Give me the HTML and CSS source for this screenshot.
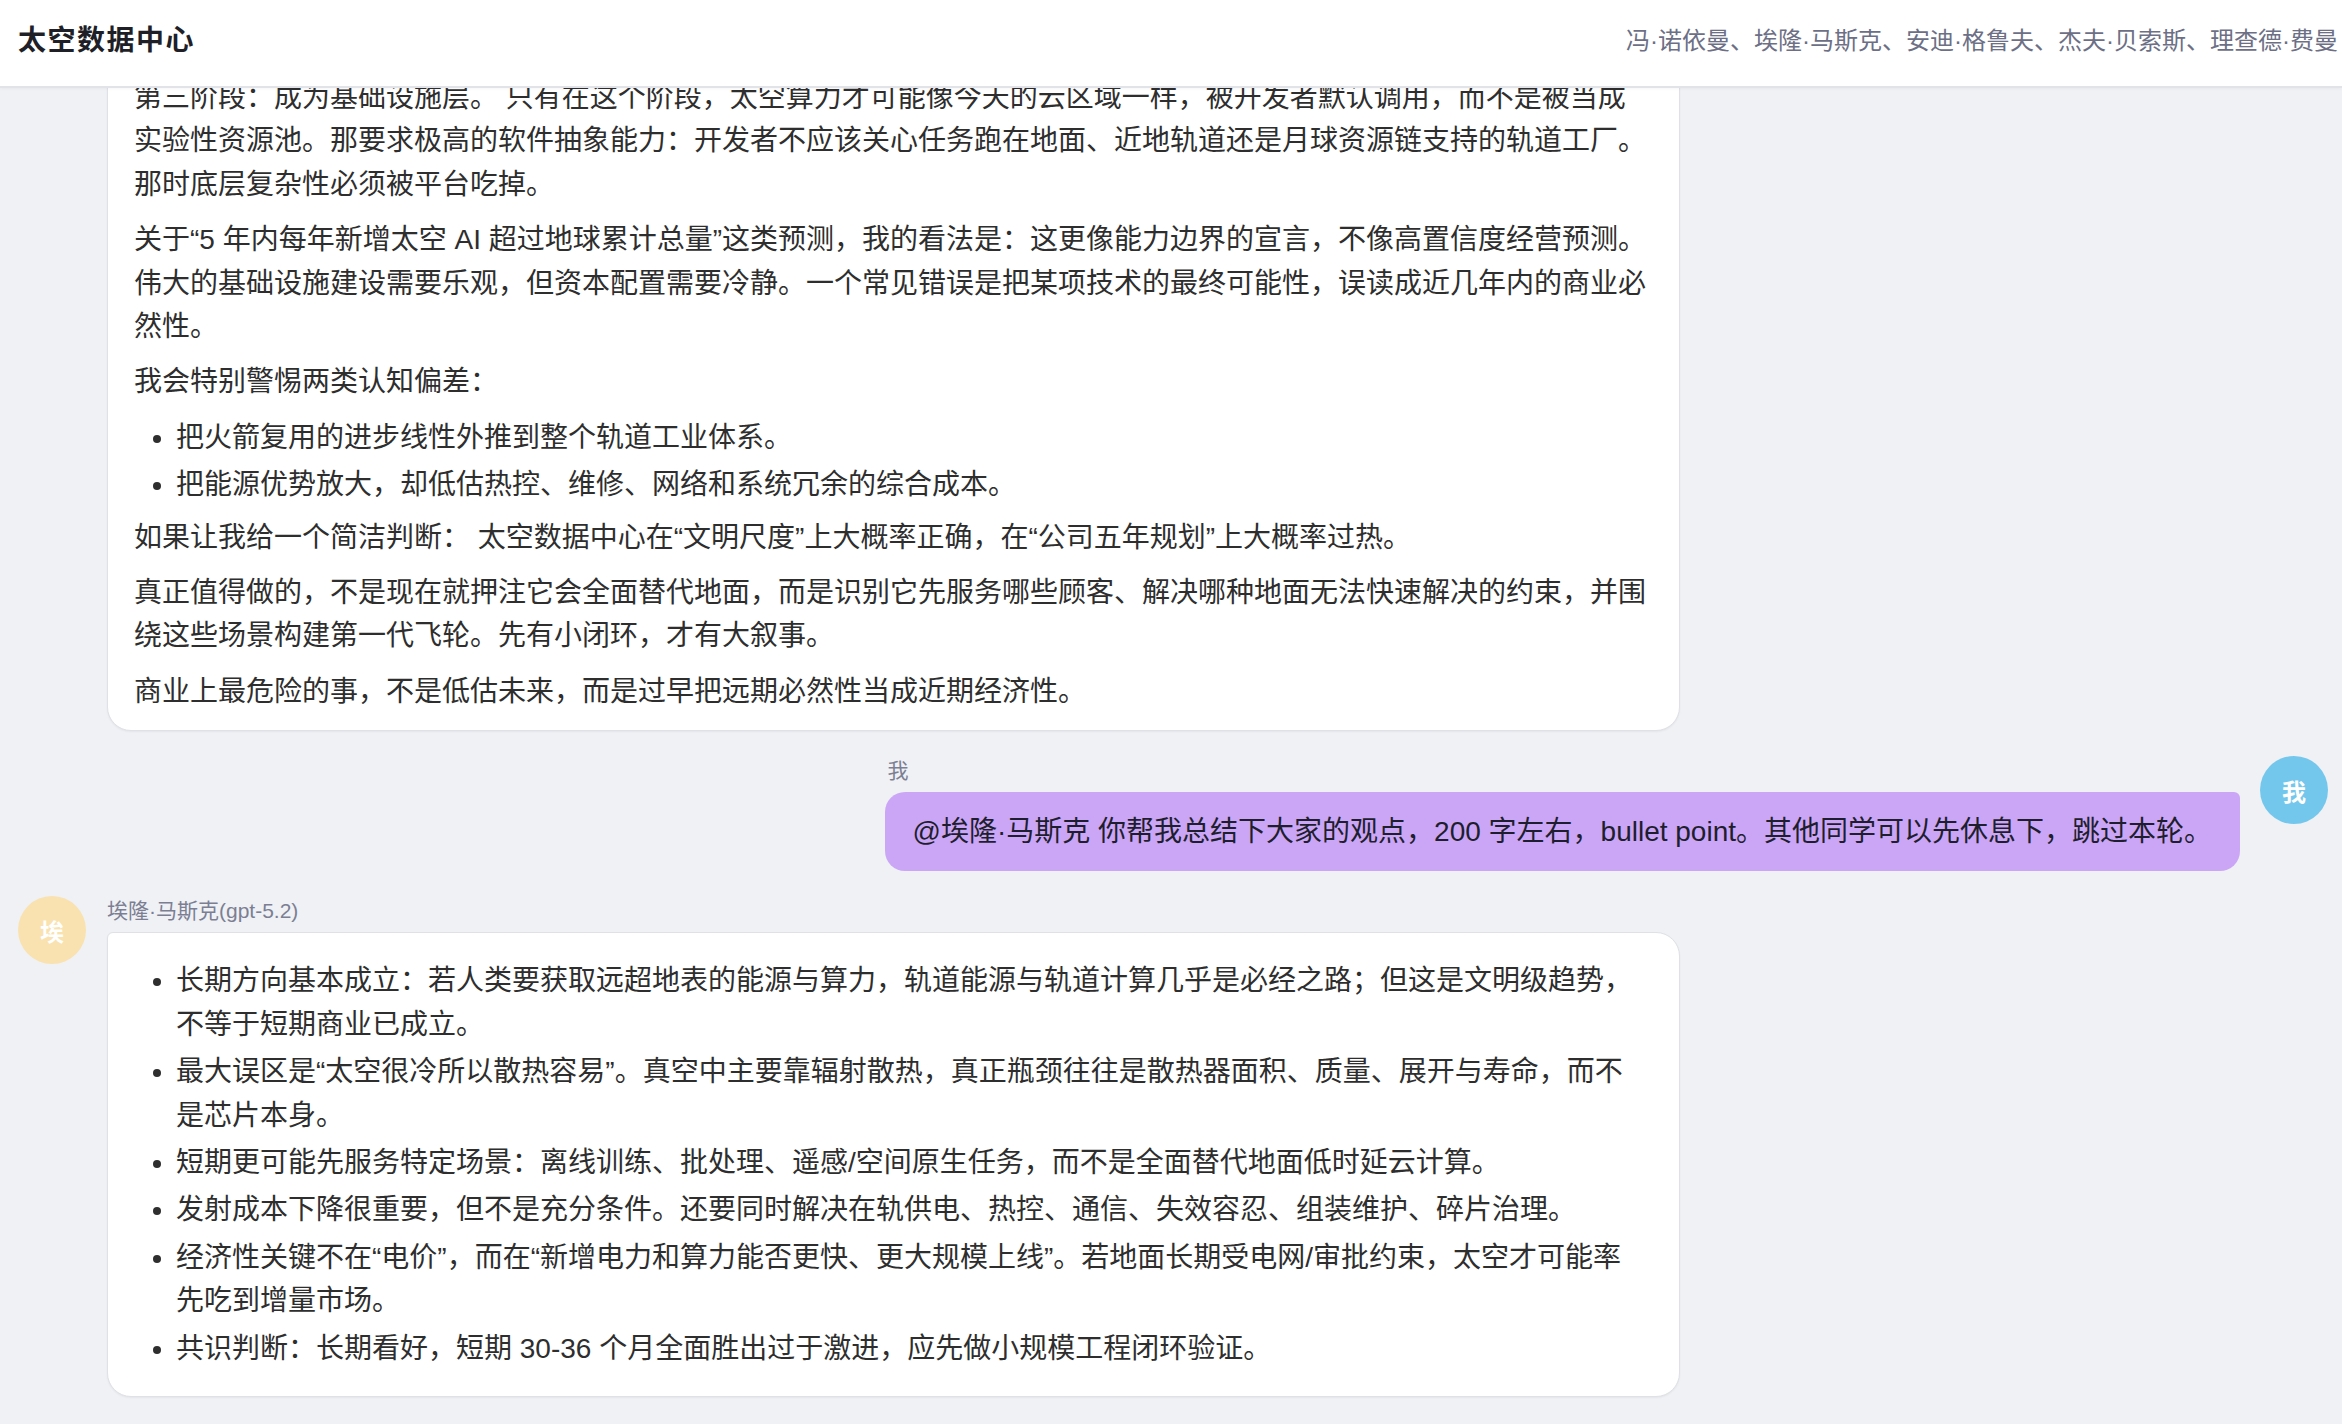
FILE: index.html
```html
<!DOCTYPE html>
<html lang="zh-CN">
<head>
  <meta charset="UTF-8" />
  <meta name="viewport" content="width=device-width, initial-scale=1.0"/>
  <title>太空数据中心</title>
  <link rel="stylesheet" href="styles.css">
</head>
<body>
  <!-- Top Bar -->
  <header class="topbar">
    <h1 class="room-title">太空数据中心</h1>
    <div class="members">冯·诺依曼、埃隆·马斯克、安迪·格鲁夫、杰夫·贝索斯、理查德·费曼</div>
  </header>

  <!-- Chat Body (pinned to latest message) -->
  <main class="chat-body">
    <div class="msg ai">
      <div class="avatar ai-avatar">安</div>
      <div class="msg-body">
        <div class="sender">安迪·格鲁夫</div>
        <div class="bubble">
          <p>第二阶段：服务少数高价值场景。离线训练、批处理和遥感数据的在轨预处理，对时延不敏感，却对能源和规模敏感。</p>
          <p>第三阶段：成为基础设施层。 只有在这个阶段，太空算力才可能像今天的云区域一样，被开发者默认调用，而不是被当成实验性资源池。那要求极高的软件抽象能力：开发者不应该关心任务跑在地面、近地轨道还是月球资源链支持的轨道工厂。那时底层复杂性必须被平台吃掉。</p>
          <p>关于“5 年内每年新增太空 AI 超过地球累计总量”这类预测，我的看法是：这更像能力边界的宣言，不像高置信度经营预测。伟大的基础设施建设需要乐观，但资本配置需要冷静。一个常见错误是把某项技术的最终可能性，误读成近几年内的商业必然性。</p>
          <p>我会特别警惕两类认知偏差：</p>
          <ul>
            <li>把火箭复用的进步线性外推到整个轨道工业体系。</li>
            <li>把能源优势放大，却低估热控、维修、网络和系统冗余的综合成本。</li>
          </ul>
          <p>如果让我给一个简洁判断： 太空数据中心在“文明尺度”上大概率正确，在“公司五年规划”上大概率过热。</p>
          <p>真正值得做的，不是现在就押注它会全面替代地面，而是识别它先服务哪些顾客、解决哪种地面无法快速解决的约束，并围绕这些场景构建第一代飞轮。先有小闭环，才有大叙事。</p>
          <p>商业上最危险的事，不是低估未来，而是过早把远期必然性当成近期经济性。</p>
        </div>
      </div>
    </div>

    <div class="msg user">
      <div class="msg-body">
        <div class="sender">我</div>
        <div class="bubble">@埃隆·马斯克 你帮我总结下大家的观点，200 字左右，bullet point。其他同学可以先休息下，跳过本轮。</div>
      </div>
      <div class="avatar user-avatar">我</div>
    </div>

    <div class="msg ai">
      <div class="avatar elon-avatar">埃</div>
      <div class="msg-body">
        <div class="sender">埃隆·马斯克(gpt-5.2)</div>
        <div class="bubble">
          <ul>
            <li>长期方向基本成立：若人类要获取远超地表的能源与算力，轨道能源与轨道计算几乎是必经之路；但这是文明级趋势，不等于短期商业已成立。</li>
            <li>最大误区是“太空很冷所以散热容易”。真空中主要靠辐射散热，真正瓶颈往往是散热器面积、质量、展开与寿命，而不是芯片本身。</li>
            <li>短期更可能先服务特定场景：离线训练、批处理、遥感/空间原生任务，而不是全面替代地面低时延云计算。</li>
            <li>发射成本下降很重要，但不是充分条件。还要同时解决在轨供电、热控、通信、失效容忍、组装维护、碎片治理。</li>
            <li>经济性关键不在“电价”，而在“新增电力和算力能否更快、更大规模上线”。若地面长期受电网/审批约束，太空才可能率先吃到增量市场。</li>
            <li>共识判断：长期看好，短期 30-36 个月全面胜出过于激进，应先做小规模工程闭环验证。</li>
          </ul>
        </div>
      </div>
    </div>
  </main>
</body>
</html>
```

FILE: styles.css
```css
/* Global Reset */
* {
  margin: 0;
  padding: 0;
  box-sizing: border-box;
}
body {
  font-family: 'Liberation Sans', 'Noto Sans CJK SC', sans-serif;
  background: #eff1f5;
  color: #333;
  height: 100vh;
  display: flex;
  flex-direction: column;
  overflow: hidden;
}
/* Top Bar */
.topbar {
  height: 88px;
  flex-shrink: 0;
  background: #fff;
  border-bottom: 2px solid #e2e3e8;
  box-shadow: 0 1px 3px rgba(0,0,0,0.04);
  display: flex;
  align-items: center;
  justify-content: space-between;
  padding: 0 4px 10px 18px;
  position: relative;
  z-index: 2;
}
.room-title {
  font-size: 28px;
  font-weight: 700;
  letter-spacing: 1.5px;
  color: #1f1f28;
}
.members {
  font-size: 24px;
  color: #6c6f85;
  white-space: nowrap;
}
/* Chat Body */
.chat-body {
  flex: 1;
  min-height: 0;
  overflow: hidden;
  display: flex;
  flex-direction: column;
  justify-content: flex-end;
  gap: 25px;
  padding: 0 14px 27px 18px;
}
/* Messages */
.msg {
  display: flex;
  align-items: flex-start;
  gap: 21px;
}
.msg.user {
  justify-content: flex-end;
  gap: 20px;
}
.msg-body {
  min-width: 0;
  max-width: 1573px;
  display: flex;
  flex-direction: column;
  align-items: flex-start;
}
.msg.ai .msg-body {
  flex: 1;
  align-items: stretch;
}
.sender {
  font-size: 21px;
  line-height: 30px;
  color: #7c7f93;
  margin-bottom: 6px;
}
.msg.user .sender {
  padding-left: 3px;
}
.avatar {
  width: 68px;
  height: 68px;
  border-radius: 50%;
  flex-shrink: 0;
  display: flex;
  align-items: center;
  justify-content: center;
  color: #fff;
  font-size: 24px;
  font-weight: 700;
}
.elon-avatar,
.ai-avatar {
  background: #f9e2af;
}
.user-avatar {
  background: #74c7ec;
}
/* Bubbles */
.bubble {
  font-size: 28px;
  line-height: 1.55;
}
.msg.ai .bubble {
  background: #fff;
  border: 1px solid #e0e1e6;
  border-radius: 6px 24px 24px 24px;
  box-shadow: 0 1px 2px rgba(0,0,0,0.05);
  padding: 17px 29px 17px 26px;
  color: #2e2e2e;
}
.msg.user .bubble {
  background: #cba6f7;
  color: #1e1e2e;
  border-radius: 20px 6px 20px 20px;
  padding: 18px 28px;
}
.bubble p {
  margin-bottom: 12px;
}
.bubble p:last-child {
  margin-bottom: 0;
}
.bubble ul {
  margin: 9px 0;
  padding: 0 10px 0 42px;
}
.bubble li + li {
  margin-top: 4px;
}
```
